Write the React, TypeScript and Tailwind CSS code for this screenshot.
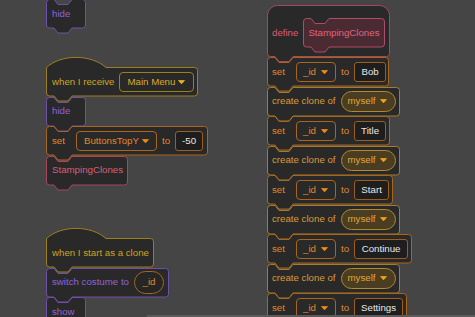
import React from 'react';

type Tone = { line: string; fill: string };

const LOOKS: Tone = { line: '#6e50a8', fill: '#292929' };
const EVENTS: Tone = { line: '#9a7f1f', fill: '#292929' };
const VARS: Tone = { line: '#a8661c', fill: '#292929' };
const CONTROL: Tone = { line: '#a57c2c', fill: '#292929' };
const MYBLOCKS: Tone = { line: '#a5485f', fill: '#292929' };
const PROTO: Tone = { line: '#b04c65', fill: '#4a2a33' };

// notch geometry
const R = 3;
const N0 = 8;
const S = 4;
const F = 10;
const D = 5;
const ARC = 10;

const bottomEdge = (w: number, h: number) =>
  `V${h - R - 0.5} A${R} ${R} 0 0 1 ${w - R - 0.5} ${h - 0.5} H${N0 + 2 * S + F} L${N0 + S + F} ${h + D - 0.5} H${N0 + S} L${N0} ${h - 0.5} H${R + 0.5} A${R} ${R} 0 0 1 0.5 ${h - R - 0.5} Z`;

const stackPath = (w: number, h: number) =>
  `M0.5 ${R + 0.5} A${R} ${R} 0 0 1 ${R + 0.5} 0.5 H${N0} L${N0 + S} ${D + 0.5} H${N0 + S + F} L${N0 + 2 * S + F} 0.5 H${w - R - 0.5} A${R} ${R} 0 0 1 ${w - 0.5} ${R + 0.5} ` +
  bottomEdge(w, h);

const hatPath = (w: number, h: number) =>
  `M0.5 ${ARC + 0.5} C15 ${ARC - 13} 45 ${ARC - 13} 60 ${ARC + 0.5} H${w - R - 0.5} A${R} ${R} 0 0 1 ${w - 0.5} ${ARC + R + 0.5} ` +
  bottomEdge(w, ARC + h);

const definePath = (w: number, h: number) => {
  const r = 10;
  return (
    `M0.5 ${r + 0.5} A${r} ${r} 0 0 1 ${r + 0.5} 0.5 H${w - r - 0.5} A${r} ${r} 0 0 1 ${w - 0.5} ${r + 0.5} ` +
    bottomEdge(w, h)
  );
};

interface BlockProps {
  w: number;
  h?: number;
  kind?: 'stack' | 'hat' | 'define';
  tone: Tone;
  className: string;
  children: React.ReactNode;
}

const Block: React.FC<BlockProps> = ({ w, h = 29.5, kind = 'stack', tone, className, children }) => {
  const d = kind === 'hat' ? hatPath(w, h) : kind === 'define' ? definePath(w, h) : stackPath(w, h);
  return (
    <div className={`relative flex shrink-0 items-center ${className}`}>
      <svg className="absolute left-0 top-0 overflow-visible" width={w} height={kind === 'hat' ? h + ARC : h}>
        <path d={d} fill={tone.fill} stroke={tone.line} strokeWidth={1} strokeLinejoin="round" />
      </svg>
      <div className="relative flex items-center gap-[5px]">{children}</div>
    </div>
  );
};

const Arrow = ({ color }: { color: string }) => (
  <svg width="7" height="4" viewBox="0 0 7 4" className="shrink-0">
    <path d="M0.5 0.5 H6.5 L4 3.4 Q3.5 3.9 3 3.4 Z" fill={color} stroke={color} strokeWidth="0.7" strokeLinejoin="round" />
  </svg>
);

const VarMenu = ({ label, className }: { label: string; className: string }) => (
  <div className={`flex h-[20px] items-center justify-between rounded-[4px] border border-[#a8661c] text-[#e0882a] ${className}`}>
    <span>{label}</span>
    <Arrow color="#f08c12" />
  </div>
);

const Value = ({ label, className }: { label: string; className: string }) => (
  <div className={`flex h-[20px] items-center justify-center rounded-[3px] border border-[#9c5e1c] bg-[#1e1e1e] text-[#e8e8e8] ${className}`}>
    {label}
  </div>
);

const SetVar = ({ w, cls, name, menuCls, value, valueCls, pad }: { w: number; cls: string; name: string; menuCls: string; value: string; valueCls: string; pad: string }) => (
  <Block w={w} tone={VARS} className={`h-[29.5px] ${cls} ${pad}`}>
    <span className="w-[19px] text-[#e0882a]">set</span>
    <VarMenu label={name} className={menuCls} />
    <span className="text-[#e0882a]">to</span>
    <Value label={value} className={valueCls} />
  </Block>
);

const CloneMyself = () => (
  <Block w={133} tone={CONTROL} className="h-[29.5px] w-[133px] pl-[5px]">
    <span className="text-[#d89c34]">create clone of</span>
    <div className="flex h-[21px] w-[55px] items-center justify-between rounded-full border border-[#b08a30] bg-[#4a3d21] pl-[6px] pr-[8px] text-[#e2a836]">
      <span>myself</span>
      <Arrow color="#f2a60e" />
    </div>
  </Block>
);

export default function App() {
  return (
    <div className="relative h-[317px] w-[475px] overflow-hidden bg-[#454545] font-['Liberation_Sans',Arial,sans-serif] text-[9.7px] leading-none">
      {/* script: tail of an earlier stack */}
      <div className="absolute left-[46px] top-[-1px] flex flex-col">
        <Block w={40} tone={LOOKS} className="h-[29.5px] w-[40px] pl-[6px]">
          <span className="text-[#9262dc]">hide</span>
        </Block>
      </div>

      {/* script: when I receive */}
      <div className="absolute left-[46px] top-[57px] flex flex-col">
        <Block w={152} kind="hat" tone={EVENTS} className="h-[39.5px] w-[152px] pl-[6px] pt-[10px]">
          <span className="text-[#cfa522]">when I receive</span>
          <div className="flex h-[20px] w-[75px] items-center justify-between rounded-[4px] border border-[#9a7f1f] pl-[7px] pr-[8px] text-[#d8ac24]">
            <span>Main Menu</span>
            <Arrow color="#e8b61c" />
          </div>
        </Block>
        <Block w={40} tone={LOOKS} className="h-[29.5px] w-[40px] pl-[6px]">
          <span className="text-[#9262dc]">hide</span>
        </Block>
        <SetVar w={162} cls="w-[162px]" pad="pl-[6px]" name="ButtonsTopY" menuCls="w-[81px] pl-[7px] pr-[7px]" value="-50" valueCls="w-[28px]" />
        <Block w={82} tone={MYBLOCKS} className="h-[29.5px] w-[82px] pl-[6px]">
          <span className="text-[#dc5c78]">StampingClones</span>
        </Block>
      </div>

      {/* script: when I start as a clone */}
      <div className="absolute left-[46px] top-[228px] flex flex-col">
        <Block w={108} kind="hat" tone={EVENTS} className="h-[39.5px] w-[108px] pl-[6px] pt-[10px]">
          <span className="text-[#cfa522]">when I start as a clone</span>
        </Block>
        <Block w={123} tone={LOOKS} className="h-[29.5px] w-[123px] pl-[6px]">
          <span className="text-[#9262dc]">switch costume to</span>
          <div className="flex h-[23px] w-[30px] items-center justify-center rounded-full border border-[#a8641c] bg-[#262626] text-[#e0882a]">
            _id
          </div>
        </Block>
        <Block w={40} tone={LOOKS} className="h-[29.5px] w-[40px] pl-[6px]">
          <span className="text-[#9262dc]">show</span>
        </Block>
      </div>

      {/* script: define StampingClones */}
      <div className="absolute left-[267px] top-[5px] flex flex-col">
        <Block w={123} h={52} kind="define" tone={MYBLOCKS} className="h-[52px] w-[123px] pl-[5px] pt-[4px]">
          <span className="text-[#dc5c78]">define</span>
          <Block w={82} tone={PROTO} className="h-[29.5px] w-[82px] pl-[5px]">
            <span className="text-[#e2647e]">StampingClones</span>
          </Block>
        </Block>
        <SetVar w={122} cls="w-[122px]" pad="pl-[5px]" name="_id" menuCls="w-[40px] pl-[6px] pr-[7px]" value="Bob" valueCls="w-[32px]" />
        <CloneMyself />
        <SetVar w={123} cls="w-[123px]" pad="pl-[5px]" name="_id" menuCls="w-[40px] pl-[6px] pr-[7px]" value="Title" valueCls="w-[32px]" />
        <CloneMyself />
        <SetVar w={126} cls="w-[126px]" pad="pl-[5px]" name="_id" menuCls="w-[40px] pl-[6px] pr-[7px]" value="Start" valueCls="w-[35px]" />
        <CloneMyself />
        <SetVar w={145} cls="w-[145px]" pad="pl-[5px]" name="_id" menuCls="w-[40px] pl-[6px] pr-[7px]" value="Continue" valueCls="w-[54px]" />
        <CloneMyself />
        <SetVar w={140} cls="w-[140px]" pad="pl-[5px]" name="_id" menuCls="w-[40px] pl-[6px] pr-[7px]" value="Settings" valueCls="w-[49px]" />
      </div>

      {/* horizontal scrollbar */}
      <div className="absolute bottom-0 left-[147px] right-0 h-[2px] bg-[#5a5a5a]" />
    </div>
  );
}
